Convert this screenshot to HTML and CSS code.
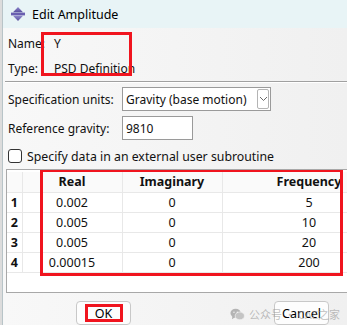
FILE: index.html
```html
<!DOCTYPE html>
<html>
<head>
    <meta charset="utf-8">
    <title>Edit Amplitude</title>
    <link rel="stylesheet" href="styles.css">
</head>
<body>
<div class="window">
    <div class="titlebar">
        <svg class="app_icon" width="16" height="16" viewBox="0 0 16 16">
            <defs>
                <linearGradient id="ic" x1="0" y1="0" x2="0" y2="1">
                    <stop offset="0" stop-color="#8c86cc"/>
                    <stop offset="1" stop-color="#5a4f9e"/>
                </linearGradient>
            </defs>
            <polygon points="8,1 3,6.2 13,6.2" fill="url(#ic)"/>
            <rect x="1" y="6.6" width="14" height="2.8" fill="#6a5fb0"/>
            <polygon points="3,9.8 13,9.8 8,15" fill="url(#ic)"/>
        </svg>
        <span class="title">Edit Amplitude</span>
    </div>

    <div class="content">
        <div class="info">
            <div class="info_row"><span class="info_label">Name:</span><span>Y</span></div>
            <div class="info_row"><span class="info_label">Type:</span><span>PSD Definition</span></div>
            <div class="mark mark_info"></div>
        </div>
        <div class="separator"></div>

        <div class="form">
            <label>Specification units:</label>
            <div class="combo">
                <span>Gravity (base motion)</span>
                <span class="combo_btn">
                    <svg width="9" height="6" viewBox="0 0 9 6"><polyline points="1,1 4.5,4.5 8,1" fill="none" stroke="#6a6a6a" stroke-width="1"/></svg>
                </span>
            </div>
            <label>Reference gravity:</label>
            <div class="text_input">9810</div>
        </div>

        <div class="check_row">
            <span class="checkbox"></span>
            <span>Specify data in an external user subroutine</span>
        </div>

        <div class="table_frame">
            <table class="grid">
                <colgroup>
                    <col class="c_num"><col class="c_real"><col class="c_imag"><col class="c_freq">
                </colgroup>
                <tr class="head">
                    <th></th><th>Real</th><th>Imaginary</th><th>Frequency</th>
                </tr>
                <tr><th>1</th><td>0.002</td><td>0</td><td>5</td></tr>
                <tr><th>2</th><td>0.005</td><td>0</td><td>10</td></tr>
                <tr><th>3</th><td>0.005</td><td>0</td><td>20</td></tr>
                <tr><th>4</th><td>0.00015</td><td>0</td><td>200</td></tr>
            </table>
            <div class="mark mark_table"></div>
        </div>

        <div class="buttons">
            <button class="btn btn_ok">OK<span class="mark mark_ok"></span></button>
            <button class="btn btn_cancel">Cancel</button>
        </div>
    </div>

    <div class="watermark">
        <svg width="15" height="13" viewBox="0 0 16 14">
            <ellipse cx="6" cy="5.5" rx="5.6" ry="4.8" fill="#b4b4b4"/>
            <polygon points="2.5,9 2,12 5.5,10" fill="#b4b4b4"/>
            <ellipse cx="10.5" cy="8.5" rx="5" ry="4.2" fill="#c4c4c4" stroke="#f2f2f2" stroke-width="0.8"/>
            <circle cx="4.2" cy="4.6" r="0.8" fill="#f2f2f2"/>
            <circle cx="7.8" cy="4.6" r="0.8" fill="#f2f2f2"/>
        </svg>
        <span>公众号 · CAE之家</span>
    </div>
</div>
</body>
</html>
```

FILE: styles.css
```css
* {
    margin: 0;
    box-sizing: border-box;
}

body {
    width: 347px;
    height: 325px;
    overflow: hidden;
    font-family: "Noto Sans", "Open Sans", sans-serif;
    font-size: 12px;
    color: #111;
    background: #dcdcdc;
}

.window {
    position: relative;
    margin-left: 2px;
    height: 325px;
    overflow: hidden;
    border-left: 1px solid #b8c4c8;
    background: linear-gradient(to right, #f8f8f8, #f0f0f0);
}

.titlebar {
    height: 28px;
    display: flex;
    align-items: center;
    padding-left: 7px;
    background: #e8f4f6;
}

.app_icon {
    margin-right: 6px;
}

.title {
    font-size: 12.5px;
    color: #000;
}

.content {
    display: flex;
    flex-direction: column;
}

.info {
    position: relative;
    padding: 3px 0 0 5px;
}

.info_row {
    height: 25px;
    display: flex;
    align-items: center;
}

.info_label {
    width: 46px;
}

.separator {
    height: 2px;
    margin-left: 2px;
    border-top: 1px solid #a0a0a0;
    border-bottom: 1px solid #ffffff;
}

.form {
    display: grid;
    grid-template-columns: 114px auto;
    row-gap: 5px;
    align-items: center;
    padding: 4px 0 0 5px;
}

.combo {
    width: 149px;
    height: 24px;
    display: flex;
    align-items: center;
    justify-content: space-between;
    padding: 1px 1px 1px 3px;
    background: #fff;
    border: 1px solid #9a9a9a;
}

.combo_btn {
    width: 12px;
    height: 20px;
    display: flex;
    align-items: center;
    justify-content: center;
    border: 1px solid #b4b4b4;
    border-radius: 2px;
}

.text_input {
    width: 71px;
    height: 24px;
    display: flex;
    align-items: center;
    padding-left: 3px;
    background: #fff;
    border: 1px solid #9a9a9a;
}

.check_row {
    display: flex;
    align-items: center;
    gap: 5px;
    height: 16px;
    margin: 8px 0 0 5px;
    font-size: 12.3px;
}

.checkbox {
    width: 14px;
    height: 14px;
    border: 1px solid #333;
    border-radius: 3px;
    background: #fff;
}

.table_frame {
    position: relative;
    height: 124px;
    margin: 5px 0 0 3px;
    border: 1px solid #a8a8a8;
    border-right: none;
    background: #fff;
    overflow: hidden;
}

.grid {
    border-collapse: collapse;
    table-layout: fixed;
    width: 389px;
    margin-top: 2px;
}

.c_num { width: 15px; }
.c_real { width: 100px; }
.c_imag { width: 100px; }
.c_freq { width: 174px; }

.grid th,
.grid td {
    height: 20px;
    padding: 0;
    text-align: center;
    border: 1px solid #e8e8e8;
    font-size: 12.5px;
}

.grid th {
    font-weight: bold;
}

.grid tr:first-child th {
    border-top: none;
}

.grid tr th:first-child {
    border-left: none;
}

.head th {
    background: #fafafa;
}

.buttons {
    display: flex;
    padding: 8px 0 0 73px;
    gap: 143px;
}

.btn {
    position: relative;
    width: 55px;
    height: 24px;
    font-family: inherit;
    font-size: 12.5px;
    color: #000;
    background: #fdfdfd;
    border: 1px solid #c8c8c8;
    border-radius: 4px;
}

.mark {
    position: absolute;
    border: 3px solid #f0141e;
}

.mark_info {
    left: 38px;
    top: 4px;
    width: 91px;
    height: 44px;
}

.mark_table {
    left: 33px;
    top: -1px;
    width: 303px;
    height: 107px;
}

.mark_ok {
    left: 8px;
    top: 2px;
    width: 38px;
    height: 18px;
}

.watermark {
    position: absolute;
    left: 227px;
    top: 306px;
    display: flex;
    align-items: center;
    gap: 4px;
    white-space: nowrap;
    font-family: "Noto Sans CJK SC", sans-serif;
    font-size: 11px;
    color: rgba(150, 150, 150, 0.6);
    pointer-events: none;
}
```
